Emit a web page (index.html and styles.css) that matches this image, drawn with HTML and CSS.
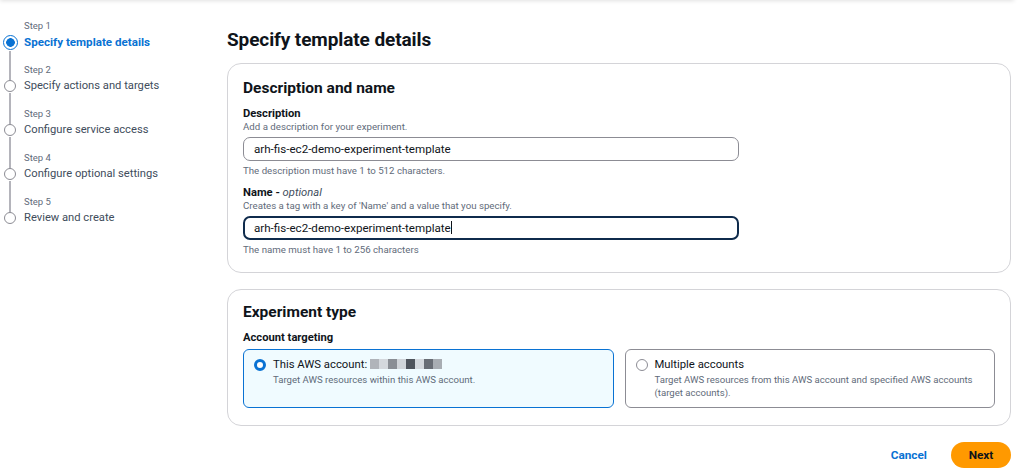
FILE: index.html
```html
<!DOCTYPE html>
<html>
<head>
<meta charset="utf-8">
<link rel="stylesheet" href="styles.css">
</head>
<body>
<div class="topshadow"></div>
<div class="page">
  <nav class="steps">
    <div class="step active">
      <div class="rail"><span class="dot"></span><span class="line"></span></div>
      <div class="stext"><div class="slabel">Step 1</div><div class="stitle">Specify template details</div></div>
    </div>
    <div class="step">
      <div class="rail"><span class="dot"></span><span class="line"></span></div>
      <div class="stext"><div class="slabel">Step 2</div><div class="stitle">Specify actions and targets</div></div>
    </div>
    <div class="step">
      <div class="rail"><span class="dot"></span><span class="line"></span></div>
      <div class="stext"><div class="slabel">Step 3</div><div class="stitle">Configure service access</div></div>
    </div>
    <div class="step">
      <div class="rail"><span class="dot"></span><span class="line"></span></div>
      <div class="stext"><div class="slabel">Step 4</div><div class="stitle">Configure optional settings</div></div>
    </div>
    <div class="step last">
      <div class="rail"><span class="dot"></span></div>
      <div class="stext"><div class="slabel">Step 5</div><div class="stitle">Review and create</div></div>
    </div>
  </nav>
  <main class="main">
    <h1 class="title">Specify template details</h1>
    <section class="card c1">
      <h2 class="ctitle">Description and name</h2>
      <div class="field">
        <div class="flabel">Description</div>
        <div class="fhint">Add a description for your experiment.</div>
        <div class="input">arh-fis-ec2-demo-experiment-template</div>
        <div class="fconstraint">The description must have 1 to 512 characters.</div>
      </div>
      <div class="field">
        <div class="flabel">Name - <i>optional</i></div>
        <div class="fhint">Creates a tag with a key of 'Name' and a value that you specify.</div>
        <div class="input focus">arh-fis-ec2-demo-experiment-template<span class="caret"></span></div>
        <div class="fconstraint">The name must have 1 to 256 characters</div>
      </div>
    </section>
    <section class="card c2">
      <h2 class="ctitle">Experiment type</h2>
      <div class="flabel">Account targeting</div>
      <div class="tiles">
        <div class="tile selected">
          <span class="radio on"></span>
          <div class="tcontent">
            <div class="tlabel">This AWS account: <span class="blur"><i class="b1"></i><i class="b2"></i><i class="b3"></i><i class="b4"></i><i class="b5"></i><i class="b6"></i><i class="b7"></i><i class="b8"></i></span></div>
            <div class="tdesc">Target AWS resources within this AWS account.</div>
          </div>
        </div>
        <div class="tile">
          <span class="radio"></span>
          <div class="tcontent">
            <div class="tlabel">Multiple accounts</div>
            <div class="tdesc">Target AWS resources from this AWS account and specified AWS accounts (target accounts).</div>
          </div>
        </div>
      </div>
    </section>
    <div class="actions">
      <span class="cancel">Cancel</span>
      <span class="next">Next</span>
    </div>
  </main>
</div>
</body>
</html>
```
FILE: styles.css
```css
* { box-sizing: border-box; }
html, body { margin: 0; padding: 0; background: #fff; }
body {
  font-family: Roboto, "Noto Sans", sans-serif;
  color: #0f141a;
  width: 1024px;
  height: 476px;
  overflow: hidden;
  position: relative;
}
.topshadow {
  position: absolute;
  left: 0; right: 10px; top: -6px; height: 6px;
  box-shadow: 0 1px 4px rgba(0,0,0,0.12);
}
.page { display: flex; }
.steps { width: 227px; padding: 20px 0 0 3px; }
.step { display: flex; height: 44px; }
.rail {
  width: 14px;
  display: flex;
  flex-direction: column;
  align-items: center;
  padding-top: 16px;
}
.dot {
  width: 12px; height: 12px;
  border-radius: 50%;
  border: 1.3px solid #8c8c94;
  background: #fff;
  flex: none;
}
.line { width: 1.3px; background: #b4b4bb; height: 32px; margin-top: 1px; flex: none; }
.step.active .rail { padding-top: 15px; }
.step.active .dot {
  width: 15px; height: 15px;
  border: 1.6px solid #0972d3;
  background: radial-gradient(circle, #0972d3 0 4px, #fff 4.6px);
}
.step.active .line { height: 30px; }
.stext { padding-left: 7px; }
.slabel { font-size: 9.5px; line-height: 12px; color: #5f6b7a; height: 12px; }
.stitle { font-size: 11.2px; line-height: 20px; color: #414d5c; white-space: nowrap; }
.step.active .stitle { color: #0972d3; font-weight: 700; font-size: 11.6px; }
.main { width: 784px; padding-top: 26px; }
.title { margin: 0 0 9px; font-size: 19px; line-height: 28px; font-weight: 700; letter-spacing: -0.1px; }
.card {
  border: 1px solid #d4d4d8;
  border-radius: 14px;
  padding: 12px 15px 14px;
  margin-bottom: 16px;
}
.c1 { height: 210px; }
.c2 { height: 137px; padding-top: 10px; }
.ctitle { margin: 0 0 6px; font-size: 15.5px; line-height: 24px; font-weight: 700; }
.field { margin-bottom: 8px; }
.flabel { font-size: 11.2px; line-height: 15px; font-weight: 700; }
.flabel i { font-weight: 400; color: #414d5c; }
.fhint { font-size: 9.7px; line-height: 12px; color: #5f6b7a; }
.input {
  margin-top: 4px;
  width: 496px;
  height: 24px;
  border: 1px solid #8c8c94;
  border-radius: 7px;
  padding: 0 10px;
  font-size: 11.6px;
  line-height: 22px;
  color: #0f141a;
  white-space: nowrap;
}
.input.focus { border: 2px solid #0f2b4c; padding: 0 9px; line-height: 20px; }
.caret { display: inline-block; width: 1px; height: 13px; background: #0f141a; vertical-align: -2px; }
.fconstraint { margin-top: 4px; font-size: 9.7px; line-height: 12px; color: #5f6b7a; }
.tiles { display: flex; gap: 11px; margin-top: 4px; }
.tile {
  width: 371px;
  height: 59px;
  border: 1.5px solid #8c8c94;
  border-radius: 6px;
  padding: 8px 10px;
  display: flex;
  gap: 7px;
}
.tile.selected { border: 1.5px solid #0972d3; background: #f0fbff; }
.radio {
  flex: none;
  width: 12px; height: 12px;
  border-radius: 50%;
  border: 1.3px solid #8c8c94;
  background: #fff;
  margin-top: 1px;
}
.radio.on { border: 3.5px solid #0972d3; }
.tlabel { font-size: 11.3px; line-height: 14px; }
.tdesc { font-size: 9.6px; line-height: 13px; color: #5f6b7a; margin-top: 1px; padding-right: 8px; }
.blur { display: inline-flex; vertical-align: -1px; }
.blur i { display: inline-block; width: 9px; height: 10px; }
.blur .b1 { background: #b0b4ba; }
.blur .b2 { background: #d4d8dd; }
.blur .b3 { background: #8a8e95; }
.blur .b4 { background: #d0d4d9; }
.blur .b5 { background: #4f545c; }
.blur .b6 { background: #d4d8dd; }
.blur .b7 { background: #686d75; }
.blur .b8 { background: #a8adb3; }
.actions { display: flex; justify-content: flex-end; align-items: center; gap: 24px; margin-top: 0; }
.cancel { color: #0972d3; font-weight: 700; font-size: 11.8px; }
.next {
  background: #ff9900;
  color: #0f141a;
  font-weight: 700;
  font-size: 11.8px;
  width: 60px;
  height: 26px;
  border-radius: 13px;
  display: flex;
  align-items: center;
  justify-content: center;
}
```
